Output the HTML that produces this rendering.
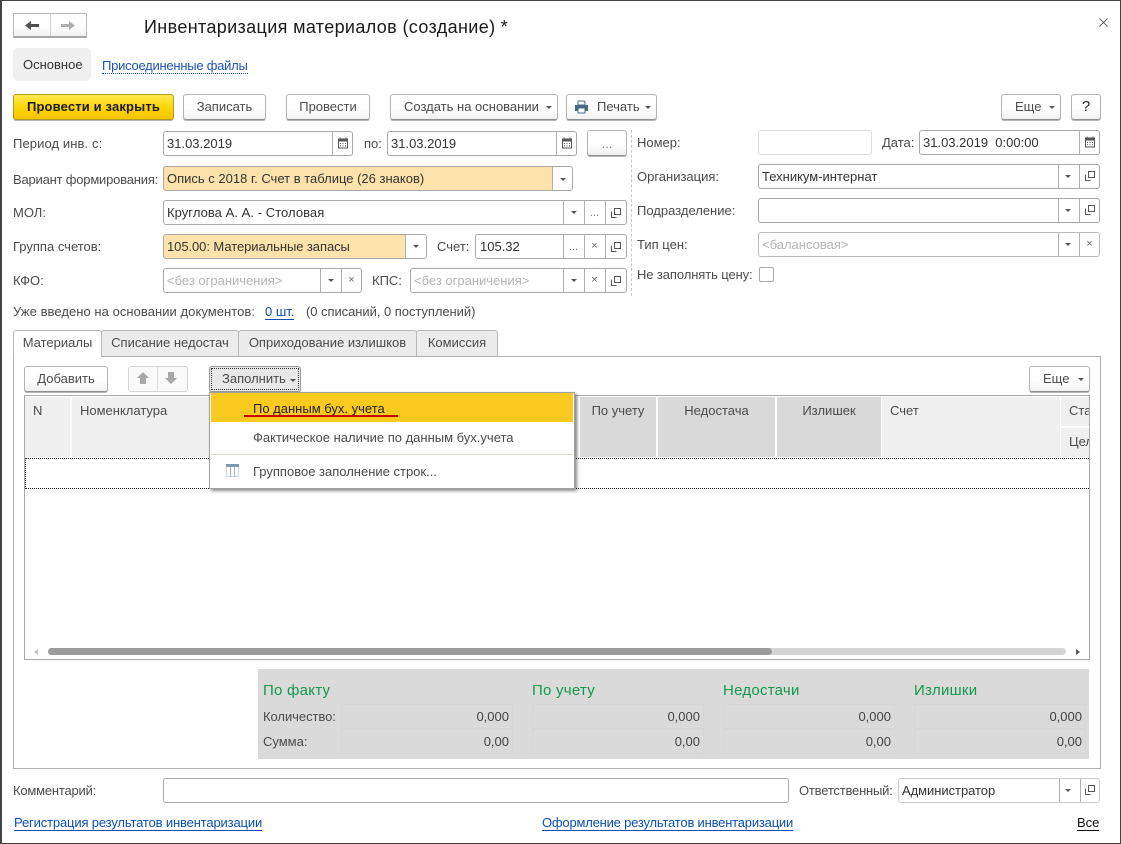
<!DOCTYPE html>
<html lang="ru"><head><meta charset="utf-8"><title>Инвентаризация материалов</title>
<style>
html,body{margin:0;padding:0;background:#fff}
#p{position:relative;width:1121px;height:844px;overflow:hidden;background:#fff;font:13px/16px "Liberation Sans",Arial,sans-serif;color:#4b4b4b;letter-spacing:0}
#p div,#p span.a,#p a,#p svg.a{position:absolute;box-sizing:border-box}
.t{white-space:nowrap}
.b{border:1px solid #b4b4b4;border-bottom:1px solid #8f8f8f;border-radius:3px;background:linear-gradient(#fff 55%,#f0f0f0);box-shadow:0 1px 0 #b5b5b5;text-align:center;line-height:24px;white-space:nowrap;height:26px}
.f{border:1px solid #a9a9a9;border-radius:3px;background:#fff;height:25px;line-height:23px;padding-left:3px;color:#333;white-space:nowrap;overflow:hidden}
.s{top:0;height:23px;width:1px;background:#b0b0b0}
.ar{width:0;height:0;border-left:3px solid transparent;border-right:3px solid transparent;border-top:3px solid #555}
.l{color:#0b4fb3;text-decoration:none;white-space:nowrap;border-bottom:1px solid #0b4fb3;line-height:15px}
.h{background:#f0f0f0;top:397px;height:60px}
.hd{background:#d9d9d9;top:397px;height:60px}
.g{color:#12994a;font-size:15px;letter-spacing:.25px;white-space:nowrap}
.v{text-align:right;color:#444;white-space:nowrap;border:1px solid #d6d6d6;height:25px;line-height:23px;padding-right:3px}
.ph{color:#b5b5b5}
.x{color:#666;font-size:11px;text-align:center;line-height:22px}
.d{color:#777;font-size:11px;text-align:center;line-height:24px}
</style></head><body>
<div id="p">
<svg width="0" height="0" style="position:absolute"><defs>
<symbol id="cal" viewBox="0 0 12 12"><path d="M1.5 2.5h9v8.5h-9z" fill="#fff" stroke="#555"/><path d="M1 1.5h10v3H1z" fill="#555"/><path d="M3 .5v2M9 .5v2" stroke="#555"/><path d="M3 6.5h1M5.5 6.5h1M8 6.5h1M3 8.8h1M5.500 8.800h1M8 8.800h1" stroke="#555"/></symbol>
<symbol id="op" viewBox="0 0 12 12"><path d="M4.500 1.500h6v6h-6z" fill="none" stroke="#555"/><path d="M1.500 4.500v6h5" fill="none" stroke="#555"/></symbol>
</defs></svg>

<div style="left:0;top:0;width:1121px;height:844px;border:1px solid #444;border-left-width:2px"></div>

<!-- nav -->
<div style="left:13px;top:13px;width:74px;height:25px;border:1px solid #b8b8b8;border-bottom:2px solid #a8a8a8;background:linear-gradient(#fff 55%,#f0f0f0)"></div>
<div style="left:50px;top:14px;width:1px;height:22px;background:#d0d0d0"></div>
<svg class="a" style="left:25px;top:20px" width="14" height="11"><path d="M0 5.500 6 1v3h8v3H6v3z" fill="#505050"/></svg>
<svg class="a" style="left:61px;top:20px" width="14" height="11"><path d="M14 5.500 8 1v3H0v3h8v3z" fill="#b0b0b0"/></svg>
<div class="t" style="left:144px;top:15px;font-size:18px;line-height:24px;color:#1a1a1a;letter-spacing:.36px">Инвентаризация материалов (создание) *</div>
<svg class="a" style="left:1099px;top:18px" width="9" height="9"><path d="M.5.500l8 8M8.500.500l-8 8" stroke="#666" fill="none"/></svg>

<div style="left:13px;top:48px;width:78px;height:33px;border-radius:5px;background:#f0f0f0"></div>
<div class="t" style="left:23px;top:57px;color:#333">Основное</div>
<div class="t" style="left:102px;top:58px;color:#1c54b8;border-bottom:1px dotted #1c54b8;line-height:15px;letter-spacing:-.25px">Присоединенные файлы</div>

<!-- top buttons -->
<div class="b" style="left:13px;top:94px;width:161px;background:linear-gradient(#ffe94d,#fdd300 60%,#f3c400);border-color:#b09a20;color:#1a1a1a;font-weight:bold;letter-spacing:.15px">Провести и закрыть</div>
<div class="b" style="left:183px;top:94px;width:83px">Записать</div>
<div class="b" style="left:286px;top:94px;width:84px">Провести</div>
<div class="b" style="left:390px;top:94px;width:168px;text-align:left;padding-left:13px">Создать на основании</div><div class="ar" style="left:546px;top:106px"></div>
<div class="b" style="left:566px;top:94px;width:91px;text-align:left;padding-left:30px">Печать</div><div class="ar" style="left:645px;top:106px"></div>
<svg class="a" style="left:574px;top:100px" width="15" height="14"><path d="M4 5V1h6l1 1v3z" fill="#fff" stroke="#47688a"/><path d="M1 5h13v6H1z" fill="#47688a"/><path d="M4 8h7v5H4z" fill="#fff" stroke="#47688a"/></svg>
<div class="b" style="left:1001px;top:94px;width:60px;text-align:left;padding-left:13px">Еще</div><div class="ar" style="left:1049px;top:106px"></div>
<div class="b" style="left:1071px;top:94px;width:30px;font-size:15px;color:#222">?</div>

<!-- left form -->
<div class="t" style="left:13px;top:136px;letter-spacing:.1px">Период инв. с:</div>
<div class="f" style="left:163px;top:131px;width:190px">31.03.2019<div class="s" style="left:168px"></div></div>
<svg class="a" style="left:337px;top:137px" width="12" height="12"><use href="#cal"/></svg>
<div class="t" style="left:364px;top:136px">по:</div>
<div class="f" style="left:387px;top:131px;width:190px">31.03.2019<div class="s" style="left:168px"></div></div>
<svg class="a" style="left:561px;top:137px" width="12" height="12"><use href="#cal"/></svg>
<div class="b" style="left:587px;top:130px;width:40px;line-height:26px;color:#888">...</div>

<div class="t" style="left:13px;top:172px;letter-spacing:-.2px">Вариант формирования:</div>
<div class="f" style="left:163px;top:166px;width:410px;line-height:24px;background:linear-gradient(90deg,#fde3ab 388px,#fff 388px)">Опись с 2018 г. Счет в таблице (26 знаков)<div class="s" style="left:388px"></div></div>
<div class="ar" style="left:560px;top:178px"></div>

<div class="t" style="left:13px;top:205px">МОЛ:</div>
<div class="f" style="left:163px;top:200px;width:464px;letter-spacing:.05px">Круглова А. А. - Столовая<div class="s" style="left:399px"></div><div class="s" style="left:420px"></div><div class="s" style="left:441px"></div></div>
<div class="ar" style="left:571px;top:211px"></div><div class="d" style="left:584px;top:201px;width:21px">...</div>
<svg class="a" style="left:610px;top:207px" width="12" height="12"><use href="#op"/></svg>

<div class="t" style="left:13px;top:239px">Группа счетов:</div>
<div class="f" style="left:163px;top:234px;width:264px;letter-spacing:-.07px;background:linear-gradient(90deg,#fde3ab 241px,#fff 241px)">105.00: Материальные запасы<div class="s" style="left:241px"></div></div>
<div class="ar" style="left:413px;top:245px"></div>
<div class="t" style="left:437px;top:239px">Счет:</div>
<div class="f" style="left:475px;top:234px;width:152px;padding-left:4px">105.32<div class="s" style="left:87px"></div><div class="s" style="left:108px"></div><div class="s" style="left:129px"></div></div>
<div class="d" style="left:563px;top:235px;width:21px">...</div><div class="x" style="left:584px;top:235px;width:21px">×</div>
<svg class="a" style="left:610px;top:241px" width="12" height="12"><use href="#op"/></svg>

<div class="t" style="left:13px;top:273px">КФО:</div>
<div class="f ph" style="left:163px;top:268px;width:199px">&lt;без ограничения&gt;<div class="s" style="left:156px"></div><div class="s" style="left:177px"></div></div>
<div class="ar" style="left:328px;top:279px"></div><div class="x" style="left:341px;top:269px;width:21px">×</div>
<div class="t" style="left:372px;top:273px">КПС:</div>
<div class="f ph" style="left:410px;top:268px;width:217px">&lt;без ограничения&gt;<div class="s" style="left:152px"></div><div class="s" style="left:173px"></div><div class="s" style="left:194px"></div></div>
<div class="ar" style="left:571px;top:279px"></div><div class="x" style="left:584px;top:269px;width:21px">×</div>
<svg class="a" style="left:610px;top:275px" width="12" height="12"><use href="#op"/></svg>

<!-- divider -->
<div style="left:631px;top:130px;width:0;height:166px;border-left:1px dashed #c8c8c8"></div>

<!-- right form -->
<div class="t" style="left:637px;top:135px">Номер:</div>
<div class="f" style="left:758px;top:130px;width:114px;border-color:#ddd"></div>
<div class="t" style="left:882px;top:135px">Дата:</div>
<div class="f" style="left:919px;top:130px;width:181px">31.03.2019&nbsp; 0:00:00<div class="s" style="left:159px"></div></div>
<svg class="a" style="left:1084px;top:136px" width="12" height="12"><use href="#cal"/></svg>

<div class="t" style="left:637px;top:169px">Организация:</div>
<div class="f" style="left:758px;top:164px;width:342px">Техникум-интернат<div class="s" style="left:299px"></div><div class="s" style="left:320px"></div></div>
<div class="ar" style="left:1065px;top:175px"></div>
<svg class="a" style="left:1084px;top:170px" width="12" height="12"><use href="#op"/></svg>

<div class="t" style="left:637px;top:203px">Подразделение:</div>
<div class="f" style="left:758px;top:198px;width:342px"><div class="s" style="left:299px"></div><div class="s" style="left:320px"></div></div>
<div class="ar" style="left:1065px;top:209px"></div>
<svg class="a" style="left:1084px;top:204px" width="12" height="12"><use href="#op"/></svg>

<div class="t" style="left:637px;top:237px">Тип цен:</div>
<div class="f ph" style="left:758px;top:232px;width:342px;border-color:#bbb">&lt;балансовая&gt;<div class="s" style="left:299px"></div><div class="s" style="left:320px"></div></div>
<div class="ar" style="left:1065px;top:243px"></div><div class="x" style="left:1079px;top:233px;width:21px">×</div>

<div class="t" style="left:637px;top:267px;letter-spacing:-.1px">Не заполнять цену:</div>
<div style="left:759px;top:267px;width:15px;height:15px;border:1px solid #a9a9a9;border-radius:2px"></div>

<div class="t" style="left:13px;top:304px;letter-spacing:.05px">Уже введено на основании документов:</div>
<a class="l" style="left:265px;top:304px">0 шт.</a>
<div class="t" style="left:306px;top:304px;letter-spacing:-.05px">(0 списаний, 0 поступлений)</div>

<!-- tabs -->
<div style="left:13px;top:356px;width:1088px;height:413px;border:1px solid #b0b0b0"></div>
<div class="t" style="left:101px;top:330px;width:138px;height:26px;background:#ececec;border:1px solid #b8b8b8;border-bottom:0;text-align:center;line-height:24px;border-radius:3px 3px 0 0">Списание недостач</div>
<div class="t" style="left:238px;top:330px;width:179px;height:26px;background:#ececec;border:1px solid #b8b8b8;border-bottom:0;text-align:center;line-height:24px;border-radius:3px 3px 0 0">Оприходование излишков</div>
<div class="t" style="left:416px;top:330px;width:82px;height:26px;background:#ececec;border:1px solid #b8b8b8;border-bottom:0;text-align:center;line-height:24px;border-radius:3px 3px 0 0">Комиссия</div>
<div class="t" style="left:13px;top:330px;width:89px;height:27px;background:#fff;border:1px solid #b8b8b8;border-bottom:0;text-align:center;line-height:24px;border-radius:3px 3px 0 0">Материалы</div>

<!-- toolbar -->
<div class="b" style="left:24px;top:366px;width:84px">Добавить</div>
<div class="b" style="left:128px;top:366px;width:60px;box-shadow:none;border-color:#d5d5d5;background:#fafafa"></div>
<div style="left:157px;top:367px;width:1px;height:24px;background:#ddd"></div>
<svg class="a" style="left:137px;top:372px" width="12" height="12"><path d="M6 0 12 6H9v6H3V6H0z" fill="#a8a8a8"/></svg>
<svg class="a" style="left:165px;top:372px" width="12" height="12"><path d="M6 12 12 6H9V0H3v6H0z" fill="#a8a8a8"/></svg>
<div class="b" style="left:209px;top:366px;width:92px;background:#e8e8e8;border-color:#9a9a9a;text-align:left;padding-left:12px">Заполнить</div>
<div style="left:211px;top:368px;width:88px;height:22px;border:1px dotted #333"></div>
<div class="ar" style="left:290px;top:379px"></div>
<div class="b" style="left:1029px;top:366px;width:61px;text-align:left;padding-left:13px">Еще</div><div class="ar" style="left:1078px;top:378px"></div>

<!-- table -->
<div style="left:24px;top:395px;width:1066px;height:265px;border:1px solid #a9a9a9;background:#fff"></div>
<div class="h t" style="left:25px;width:45px;padding:6px 8px">N</div>
<div class="h t" style="left:72px;width:506px;padding:6px 8px">Номенклатура</div>
<div class="hd t" style="left:580px;width:76px;text-align:center;padding-top:6px">По учету</div>
<div class="hd t" style="left:658px;width:117px;text-align:center;padding-top:6px">Недостача</div>
<div class="hd t" style="left:777px;width:104px;text-align:center;padding-top:6px">Излишек</div>
<div class="h t" style="left:882px;width:178px;padding:6px 8px">Счет</div>
<div class="h t" style="left:1061px;width:28px;height:29px;padding:6px 0 0 8px;overflow:hidden">Ста</div>
<div class="h t" style="left:1061px;top:428px;width:28px;height:29px;padding:6px 0 0 8px;overflow:hidden">Цел</div>
<div style="left:25px;top:458px;width:1064px;height:31px;border-top:1px dotted #222;border-bottom:1px dotted #222"></div>
<div style="left:25px;top:458px;width:0;height:31px;border-left:1px dotted #222"></div>

<!-- scrollbar -->
<div style="left:48px;top:648px;width:1018px;height:7px;background:#d4d4d4;border-radius:4px"></div>
<div style="left:48px;top:648px;width:724px;height:7px;background:#9c9c9c;border-radius:4px"></div>
<div style="left:34px;top:649px;width:0;height:0;border:3px solid transparent;border-right:4px solid #c4c4c4;border-left:0"></div>
<div style="left:1076px;top:649px;width:0;height:0;border:3px solid transparent;border-left:4px solid #555;border-right:0"></div>

<!-- menu -->
<div style="left:209px;top:392px;width:366px;height:97px;background:#fff;border:1px solid #a0a0a0;box-shadow:2px 2px 3px rgba(0,0,0,.45)"></div>
<div style="left:211px;top:393px;width:362px;height:29px;background:#facb1e"></div>
<div class="t" style="left:253px;top:401px;color:#222">По данным бух. учета</div>
<div style="left:244px;top:415px;width:154px;height:2px;background:#c40000"></div>
<div class="t" style="left:253px;top:430px">Фактическое наличие по данным бух.учета</div>
<div style="left:211px;top:454px;width:362px;height:1px;background:#e0dccb"></div>
<svg class="a" style="left:226px;top:464px" width="13" height="13"><path d="M.5 .5h12v12H.5z" fill="#fff" stroke="#9fb3c8" stroke-dasharray="1 1"/><path d="M0 0h13v3H0z" fill="#7f97ad"/><path d="M4.500 3v10M8.500 3v10" stroke="#9fb3c8"/></svg>
<div class="t" style="left:253px;top:464px">Групповое заполнение строк...</div>

<!-- totals -->
<div style="left:258px;top:669px;width:831px;height:90px;background:#dadada"></div>
<div class="g" style="left:263px;top:683px">По факту</div>
<div class="g" style="left:532px;top:683px">По учету</div>
<div class="g" style="left:723px;top:683px">Недостачи</div>
<div class="g" style="left:914px;top:683px">Излишки</div>
<div class="t" style="left:263px;top:709px;letter-spacing:-.05px">Количество:</div>
<div class="t" style="left:263px;top:734px">Сумма:</div>
<div class="v" style="left:341px;top:704px;width:172px">0,000</div>
<div class="v" style="left:532px;top:704px;width:172px">0,000</div>
<div class="v" style="left:723px;top:704px;width:172px">0,000</div>
<div class="v" style="left:914px;top:704px;width:172px">0,000</div>
<div class="v" style="left:341px;top:729px;width:172px">0,00</div>
<div class="v" style="left:532px;top:729px;width:172px">0,00</div>
<div class="v" style="left:723px;top:729px;width:172px">0,00</div>
<div class="v" style="left:914px;top:729px;width:172px">0,00</div>

<!-- bottom -->
<div class="t" style="left:13px;top:783px;letter-spacing:-.2px">Комментарий:</div>
<div class="f" style="left:163px;top:778px;width:626px"></div>
<div class="t" style="left:799px;top:783px;letter-spacing:-.2px">Ответственный:</div>
<div class="f" style="left:898px;top:778px;width:202px;border-color:#ccc;letter-spacing:-.05px">Администратор<div class="s" style="left:160px"></div><div class="s" style="left:181px"></div></div>
<div class="ar" style="left:1065px;top:789px"></div>
<svg class="a" style="left:1084px;top:784px" width="12" height="12"><use href="#op"/></svg>
<a class="l" style="left:14px;top:815px;letter-spacing:-.15px">Регистрация результатов инвентаризации</a>
<a class="l" style="left:542px;top:815px;letter-spacing:-.2px">Оформление результатов инвентаризации</a>
<a class="l" style="left:1077px;top:815px;color:#111;border-color:#111">Все</a>
</div>
</body></html>
